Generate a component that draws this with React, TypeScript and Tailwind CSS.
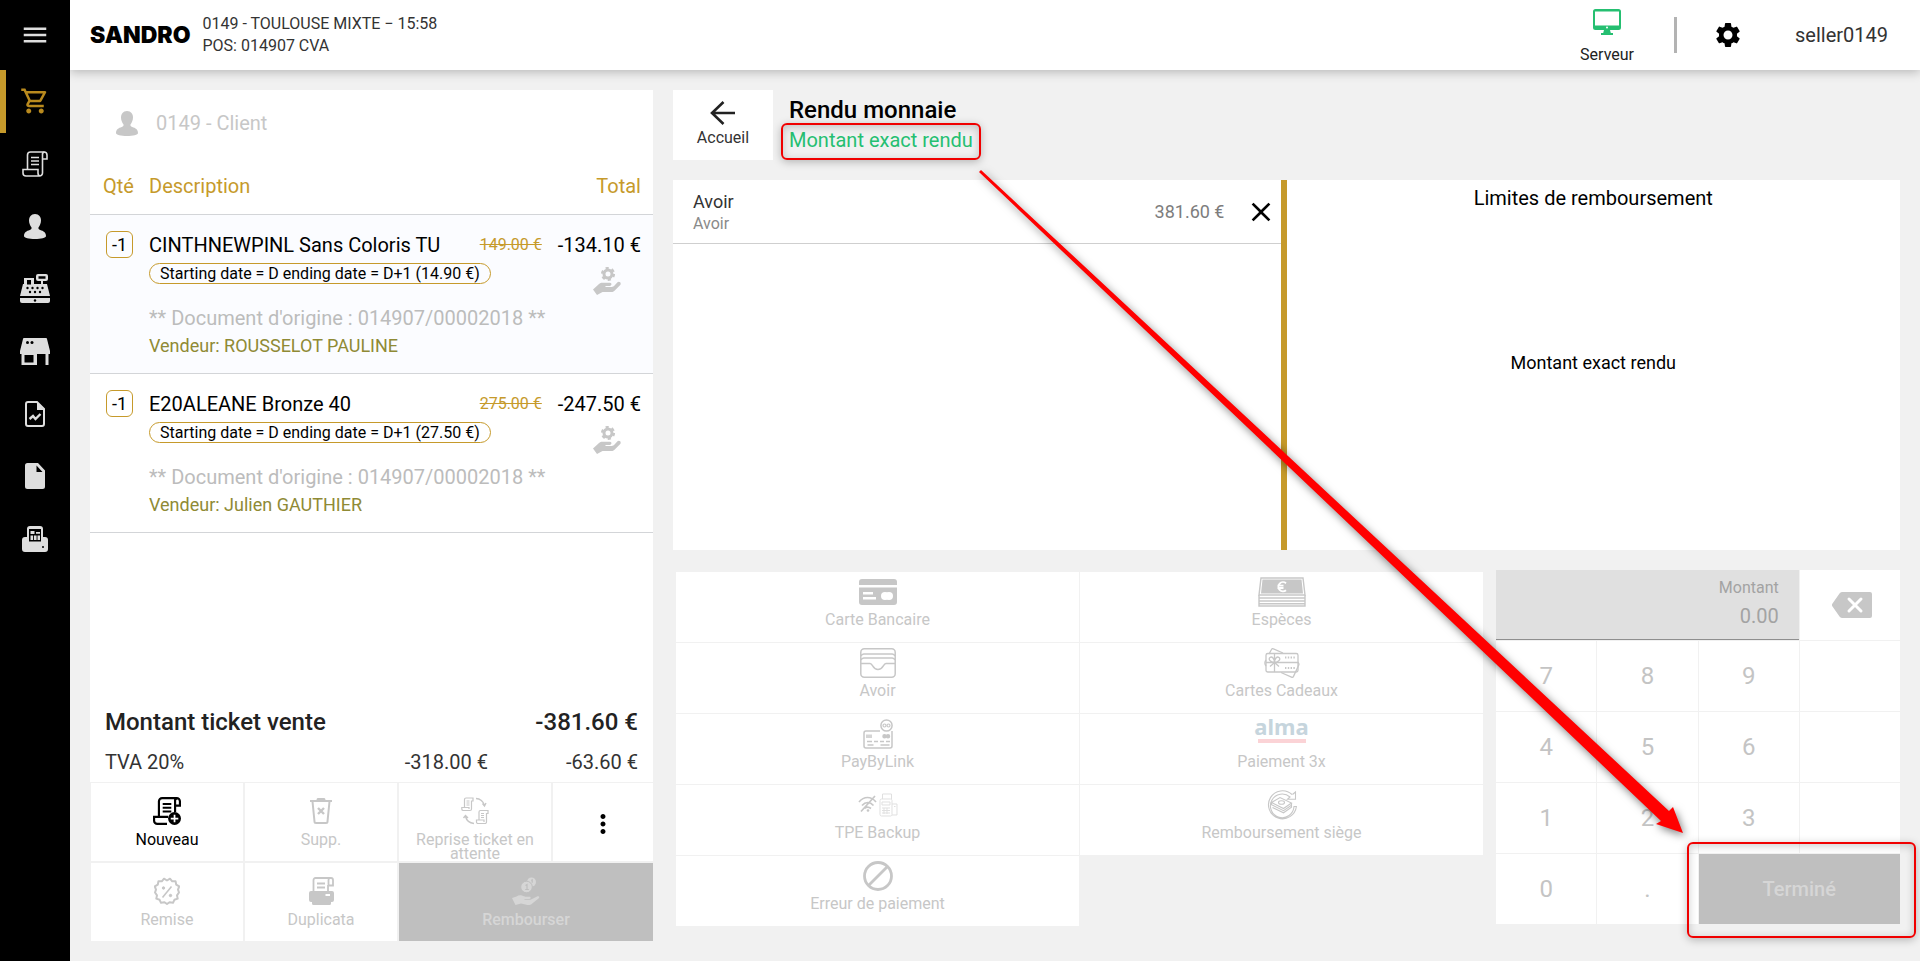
import type { ReactNode } from "react";
import clsx from "clsx";
import { MdClose, MdMenu, MdMoreVert, MdOutlineShoppingCart, MdSettings } from "react-icons/md";

/* ---------- icons ---------- */

function ReceiptIcon({ className, plus }: { className?: string; plus?: boolean }) {
  return (
    <svg viewBox="0 0 26 26" className={className} fill="none" stroke="currentColor" strokeWidth={plus ? 2 : 1.6} aria-hidden>
      <path d="M5.5 18.5V4a3 3 0 0 1 3-3H22a3 3 0 0 1 3 3v4h-4" />
      <path d={plus ? "M20.5 14V4a2.6 2.6 0 0 1 2-3" : "M20.5 22V4a2.6 2.6 0 0 1 2-3"} />
      <path d={plus ? "M14 18.5H1V22a3 3 0 0 0 3 3h9" : "M20.5 22a3 3 0 0 1-3 3H4a3 3 0 0 1-3-3v-3.5h15V22a3 3 0 0 0 2 3"} />
      <path d="M9 6.5h8M9 10h8M9 13.5h8" />
      {plus && (
        <>
          <circle cx="20" cy="20" r="6" fill="currentColor" stroke="none" />
          <path d="M20 16.5v7M16.5 20h7" stroke="white" strokeWidth="1.6" />
        </>
      )}
    </svg>
  );
}

function PersonIcon({ className }: { className?: string }) {
  return (
    <svg viewBox="0 0 22 25" className={className} fill="currentColor" aria-hidden>
      <path d="M11 0c4 0 6 3 6 6.500 0 3-1.200 5-2.400 6.800-.6 1.200.2 2.200 1.600 2.800C19.500 17 22 18.700 22 22c0 2-5 3-11 3S0 24 0 22c0-3.300 2.500-5 5.800-5.900 1.400-.6 2.200-1.600 1.600-2.800C6.200 11.500 5 9.500 5 6.500 5 3 7 0 11 0z" />
    </svg>
  );
}

function RegisterIcon() {
  return (
    <svg viewBox="0 0 30 30" className="size-[30px]" fill="currentColor" aria-hidden>
      <path fillRule="evenodd" d="M4 4h10v6h7V7h-3a2 2 0 0 1-2-2V2a2 2 0 0 1 2-2h8a2 2 0 0 1 2 2v3a2 2 0 0 1-2 2h-3v3h4l3 12H0L3 10h1zM7 6v4.500h4V6zM18.500 2.200v2.600h7V2.200z" />
      <path d="M0 24h30v3a2 2 0 0 1-2 2H2a2 2 0 0 1-2-2z" />
      <g fill="black">
        <circle cx="7.500" cy="14" r="1.200" />
        <circle cx="12.500" cy="14" r="1.200" />
        <circle cx="17.500" cy="14" r="1.200" />
        <circle cx="22.500" cy="14" r="1.200" />
        <circle cx="10" cy="18" r="1.200" />
        <circle cx="15" cy="18" r="1.200" />
        <circle cx="20" cy="18" r="1.200" />
        <circle cx="15" cy="26.500" r="1.200" />
      </g>
    </svg>
  );
}

function StoreIcon() {
  return (
    <svg viewBox="0 0 30 27" className="h-[27px] w-[30px]" fill="currentColor" aria-hidden>
      <path fillRule="evenodd" d="M4 0h22a1 1 0 0 1 1 1l3 12v3h-1.500v11h-3V16H17v11H1.500V16H0v-3L3 1a1 1 0 0 1 1-1zM4.500 17v7.500h9V17z" />
      <circle cx="7.500" cy="4.500" r="1.500" fill="black" />
      <circle cx="12" cy="4.500" r="1.500" fill="black" />
    </svg>
  );
}

function ReportIcon() {
  return (
    <svg viewBox="0 0 20 26" className="h-[26px] w-5" fill="none" stroke="currentColor" strokeWidth="2" aria-hidden>
      <path d="M3 1h9l7 7v15a2 2 0 0 1-2 2H3a2 2 0 0 1-2-2V3a2 2 0 0 1 2-2z" />
      <path d="M12 1v8h7z" fill="currentColor" stroke="none" />
      <path d="M4.500 18l3.500-3 2.500 3 5-5" strokeWidth="2.400" />
    </svg>
  );
}

function FileIcon() {
  return (
    <svg viewBox="0 0 20 26" className="h-[26px] w-5" fill="currentColor" aria-hidden>
      <path fillRule="evenodd" d="M2.500 0H13l7 7.500V23.500a2.500 2.500 0 0 1-2.500 2.500h-15A2.500 2.500 0 0 1 0 23.500v-21A2.500 2.500 0 0 1 2.500 0zM11.500 2.500v6.500h6z" />
    </svg>
  );
}

function FiscalPrinterIcon() {
  return (
    <svg viewBox="0 0 26 26" className="size-[26px]" fill="currentColor" aria-hidden>
      <path fillRule="evenodd" d="M8 0h10a3 3 0 0 1 3 3v8h2a3 3 0 0 1 3 3v9a3 3 0 0 1-3 3H3a3 3 0 0 1-3-3v-9a3 3 0 0 1 3-3h2V3a3 3 0 0 1 3-3zM7 3v12.500h12V3z" />
      <path d="M8.500 5h4v3h-4zM14 6h4v1.800h-4zM8.500 9.500h2.600V14H8.500zM12 9.500h2.600V14H12zM15.500 9.500H18V14h-2.500z" />
      <circle cx="21" cy="21" r="1" fill="black" />
    </svg>
  );
}

function MonitorIcon() {
  return (
    <svg viewBox="0 0 28 26" className="h-[26px] w-7" fill="#25bf71" aria-hidden>
      <path fillRule="evenodd" d="M2.500 0h23A2.500 2.500 0 0 1 28 2.500v16a2.500 2.500 0 0 1-2.500 2.500H17l.8 3H20v2H8v-2h2.200l.8-3H2.500A2.500 2.500 0 0 1 0 18.500v-16A2.500 2.500 0 0 1 2.500 0zM2 2.500v14h24v-14z" />
      <circle cx="14" cy="18.500" r="1" fill="white" />
    </svg>
  );
}

function GearHandIcon() {
  return (
    <svg viewBox="0 0 28 28" className="size-7" fill="currentColor" aria-hidden>
      <circle cx="15" cy="7" r="4" fill="none" stroke="currentColor" strokeWidth="3" />
      <circle cx="15" cy="7" r="6" fill="none" stroke="currentColor" strokeWidth="2.200" strokeDasharray="3.140 3.140" />
      <path d="M0 22.500l6-5.500c1-.9 2-1.200 3.500-1.200H17c2 0 2 3-.2 3.200h-4.300v1h6.300c1 0 1.800-.5 2.500-1.200l3.200-3.500c1.200-1.200 3.500-.2 3.200 1.600-.1.600-.4 1-.7 1.400l-5.500 5.500c-.9.900-1.800 1.200-3 1.200H9.500l-5.500 3z" />
    </svg>
  );
}

function ArrowLeftIcon() {
  return (
    <svg viewBox="0 0 26 24" className="h-6 w-[26px]" fill="none" stroke="#222" strokeWidth="2.600" aria-hidden>
      <path d="M13.500 1L2 12l11.500 11M2 12h23" />
    </svg>
  );
}

function TrashIcon() {
  return (
    <svg viewBox="0 0 24 28" className="h-7 w-6" fill="none" stroke="currentColor" strokeWidth="2" aria-hidden>
      <path d="M1 4h22M3.500 4.500l2 20a1.500 1.500 0 0 0 1.500 1.500h10a1.500 1.500 0 0 0 1.500-1.500l2-20M8 3l1-1h6l1 1" />
      <path d="M9 11l6 6M15 11l-6 6" strokeWidth="2.400" />
    </svg>
  );
}

function SwapTicketIcon() {
  return (
    <svg viewBox="0 0 28 28" className="size-7" fill="none" stroke="currentColor" strokeWidth="1.200" aria-hidden>
      <path d="M3.500 10V2.500a1.500 1.500 0 0 1 1.500-1.500h7v3h-1.500V12a1.500 1.500 0 0 1-1.500 1.500H2A1.500 1.500 0 0 1 .8 12v-1.500H8V12M5.500 4h3M5.500 6h3M5.500 8h3" />
      <path d="M18 22.500V15a1.500 1.500 0 0 1 1.500-1.500H27v3h-1.500V25a1.500 1.500 0 0 1-1.500 1.500h-7a1.500 1.500 0 0 1-1.500-1.500v-2h7.500v2M20 16.500h3M20 18.500h3M20 20.500h3" />
      <path d="M15 1.500c4 0 7.500 3 8.500 7M21.500 6.500l2 2.500 1.500-3M13 26.500c-4-.5-7.500-3-8.500-7M2.500 21l2-2.500L7 21" strokeWidth="1.400" />
    </svg>
  );
}

function DiscountIcon() {
  return (
    <svg viewBox="0 0 26 28" className="h-7 w-[26px]" fill="none" stroke="currentColor" strokeWidth="2" aria-hidden>
      <path strokeLinejoin="round" d="M13 3.500l3-1.800 2.200 2.600 3.400 0 .6 3.400 3 1.700-1.200 3.300L25 15.500l-2 2.900.7 3.200-3.300 1.200-1.400 3-3.500-.6L13 27l-2.500-1.800-3.500.6-1.400-3-3.300-1.200.7-3.200-2-2.900 1-2.800L.8 9.400l3-1.700.6-3.400 3.400 0L10 1.700z" />
      <path d="M17.500 9.500l-9 11" strokeWidth="1.600" />
      <circle cx="9.500" cy="11" r="1.200" fill="currentColor" strokeWidth="1" />
      <circle cx="16.500" cy="18.500" r="1.200" fill="currentColor" strokeWidth="1" />
    </svg>
  );
}

function PrintCopyIcon() {
  return (
    <svg viewBox="0 0 25 28" className="h-7 w-[25px]" fill="none" stroke="currentColor" strokeWidth="1.800" aria-hidden>
      <path d="M4.500 14V3a2 2 0 0 1 2-2H22a2 2 0 0 1 2 2v5.500h-4.500V3a2 2 0 0 1 1.500-2M19 8v6M8 6.500h8M8 10.500h8" />
      <path fillRule="evenodd" fill="currentColor" stroke="none" d="M2 14h21a2 2 0 0 1 2 2v7a2 2 0 0 1-2 2h-1v1.500a1.500 1.500 0 0 1-1.500 1.500h-16A1.500 1.500 0 0 1 3 26.500V25H2a2 2 0 0 1-2-2v-7a2 2 0 0 1 2-2zM16.500 17v2H21v-2z" />
    </svg>
  );
}

function CoinsHandIcon() {
  return (
    <svg viewBox="0 0 28 28" className="size-7" fill="currentColor" aria-hidden>
      <path d="M0 21l4.500-1.500c2-1.500 4-1.500 6-.8l3 1h4c1.500 0 1.500 2 0 2.200h-5v.8h6l6.500-3.200c2-.8 3 .8 1.500 2L19 27.500c-1.500.8-3 .6-4.500.2L9 26.500 3.500 28z" />
      <circle cx="19.500" cy="5" r="4.500" />
      <circle cx="14.500" cy="10" r="5.800" stroke="#bfbfbf" />
      <path d="M13.500 8.500l1.500-1v5M13.200 12.500h3.600M19.200 3.500l1-.7v3" fill="none" stroke="#bfbfbf" strokeWidth="1.200" />
    </svg>
  );
}

function BankCardIcon() {
  return (
    <svg viewBox="0 0 38 26" className="h-[26px] w-[38px]" fill="currentColor" aria-hidden>
      <path d="M3 0h32a3 3 0 0 1 3 3v3H0V3a3 3 0 0 1 3-3z" />
      <path fillRule="evenodd" d="M0 8.500h38V23a3 3 0 0 1-3 3H3a3 3 0 0 1-3-3zM4 13v2.500h10V13zM4 18v2.500h13V18z" />
      <circle cx="26" cy="17" r="4" fill="white" />
      <circle cx="30" cy="17" r="4" fill="white" />
    </svg>
  );
}

function CashIcon() {
  return (
    <svg viewBox="0 0 48 30" className="h-[30px] w-12" fill="none" stroke="currentColor" strokeWidth="1.400" aria-hidden>
      <path d="M3 1h42l2 17H1z" />
      <path d="M4.500 2.500h39l1.500 14H3z" fill="currentColor" stroke="none" />
      <path d="M1 18v11h46V18M1 21h46M1 24h46M1 26.800h46" />
      <path d="M28 6.200a4.600 4.600 0 1 0 0 7M19.500 8.600h6M19.500 11h6" stroke="white" strokeWidth="1.900" />
    </svg>
  );
}

function WalletIcon() {
  return (
    <svg viewBox="0 0 36 30" className="h-[30px] w-9" fill="none" stroke="currentColor" strokeWidth="1.500" aria-hidden>
      <rect x="0.800" y="0.800" width="34.400" height="28.400" rx="3.500" />
      <path d="M1 8a3 3 0 0 1 3-2h28a3 3 0 0 1 3 2M1 12a3 3 0 0 1 3-2h28a3 3 0 0 1 3 2M1 15.500h9c3 0 2.500 6 8 6s5-6 8-6h9" />
    </svg>
  );
}

function GiftCardsIcon() {
  return (
    <svg viewBox="0 0 36 30" className="h-[30px] w-9" fill="none" stroke="currentColor" strokeWidth="1.300" aria-hidden>
      <path d="M5 6l2.500-4.500a1.500 1.500 0 0 1 2-.6L19 5M17 24.500l10.500 4.600a1.500 1.500 0 0 0 2-.7L34.800 17c.5-1-.1-2-1-3M2 12c-1.500 2-1.500 4 0 6" />
      <rect x="2" y="5.500" width="32" height="18.500" rx="1.800" />
      <path d="M2 14.500h32M10.500 5.500V24M10.500 14.500C6 14 4 11 6 9.500s4.500 1 4.500 5c0-4 2.500-6.500 4.500-5s0 4.500-4.500 5l-4.500 4M10.500 14.500l4.500 4" />
      <path d="M21 9.500h10M21 20h10" strokeDasharray="1.400 1.400" strokeWidth="2" />
    </svg>
  );
}

function PayLinkIcon() {
  return (
    <svg viewBox="0 0 30 30" className="size-[30px]" fill="none" stroke="currentColor" strokeWidth="1.500" aria-hidden>
      <path d="M17 12H3a2 2 0 0 0-2 2v13a2 2 0 0 0 2 2h24a2 2 0 0 0 2-2V12" />
      <circle cx="23.500" cy="6.500" r="5.600" />
      <circle cx="21.500" cy="6.500" r="1.500" strokeWidth="1.200" />
      <circle cx="25.500" cy="6.500" r="1.500" strokeWidth="1.200" />
      <path d="M4 15.500v3.500M6 15.500v3.500M8 15.500v3.500M4 22.500h5M11 22.500h4M17 22.500h4M23 22.500h4M4.500 26h6M17.500 26h9" />
      <circle cx="21.500" cy="17.200" r="1.500" fill="currentColor" />
      <circle cx="25" cy="17.200" r="1.500" fill="currentColor" />
    </svg>
  );
}

function TpeIcon() {
  return (
    <svg viewBox="0 0 40 24" className="h-6 w-10" fill="none" stroke="currentColor" strokeWidth="1.700" aria-hidden>
      <path d="M1 9c5-6 12-6 17 0M4 12.500c3.500-4 8-4 11.500 0M6.500 15.500c2-2 4-2 6.500 0M17 3L3 18.500" />
      <circle cx="10" cy="17.500" r="1.300" fill="currentColor" stroke="none" />
      <g strokeWidth="1" opacity="0.550">
        <rect x="22" y="6" width="12" height="17" rx="1.500" />
        <path d="M24.500 6V1h9v5M24 9h8v3h-8zM24 15h8M24 17.500h8M24 20h8M34 11h5v11h-5M36 13.500h1.500" />
        <path d="M26 15v6M29 15v6" />
      </g>
    </svg>
  );
}

function AlmaLogo() {
  return (
    <span className="mb-2 flex w-12 flex-col items-center border-b-4 border-[#fbd3d6] pb-1 font-['Noto_Sans'] text-[22px] font-bold leading-[18px] text-[#c6d5dd]">
      alma
    </span>
  );
}

function CashBackIcon() {
  return (
    <svg viewBox="0 0 30 30" className="size-[30px]" fill="none" stroke="currentColor" strokeWidth="1.100" aria-hidden>
      <path d="M25 4.500A14 14 0 1 0 29.400 16.500H27A11.800 11.800 0 1 1 23 7l-2.500 2.300h8V2l-3 2.500" />
      <path d="M4.500 12.500l8.500-5 11.500 5.500-8 5.500zM4.500 12.500v2.200l12 6 8-5.500v-2.200M5.500 17.500l11 5.300 8-5.500v-2" />
      <ellipse cx="14.500" cy="12.500" rx="3" ry="1.800" />
    </svg>
  );
}

function ForbiddenIcon() {
  return (
    <svg viewBox="0 0 30 30" className="size-[30px]" fill="none" stroke="currentColor" strokeWidth="2.800" aria-hidden>
      <circle cx="15" cy="15" r="13.500" />
      <path d="M24.500 5.500l-19 19" />
    </svg>
  );
}

function BackspaceIcon() {
  return (
    <svg viewBox="0 0 40 26" className="ml-1 h-[26px] w-10" aria-hidden>
      <path d="M10 0h28a2 2 0 0 1 2 2v22a2 2 0 0 1-2 2H10a3 3 0 0 1-2.500-1.500L.5 14.500a2.500 2.500 0 0 1 0-3l7-10A3 3 0 0 1 10 0z" fill="#c7c7c7" />
      <path d="M17 7l12 12M29 7L17 19" stroke="white" strokeWidth="3" strokeLinecap="round" />
    </svg>
  );
}

/* ---------- data ---------- */

const navItems: { label: string; icon: ReactNode; active?: boolean }[] = [
  { label: "Vente", icon: <MdOutlineShoppingCart className="size-[30px]" />, active: true },
  { label: "Tickets", icon: <ReceiptIcon className="size-[26px]" /> },
  { label: "Clients", icon: <PersonIcon className="h-[25px] w-[22px]" /> },
  { label: "Caisse", icon: <RegisterIcon /> },
  { label: "Magasin", icon: <StoreIcon /> },
  { label: "Rapports", icon: <ReportIcon /> },
  { label: "Documents", icon: <FileIcon /> },
  { label: "Imprimante", icon: <FiscalPrinterIcon /> },
];

const ticketLines = [
  { name: "CINTHNEWPINL Sans Coloris TU", oldPrice: "149.00 €", price: "-134.10 €", discount: "14.90 €", seller: "ROUSSELOT PAULINE", selected: true },
  { name: "E20ALEANE Bronze 40", oldPrice: "275.00 €", price: "-247.50 €", discount: "27.50 €", seller: "Julien GAUTHIER", selected: false },
];

const paymentMethods: { label: string; icon: ReactNode }[] = [
  { label: "Carte Bancaire", icon: <BankCardIcon /> },
  { label: "Espèces", icon: <CashIcon /> },
  { label: "Avoir", icon: <WalletIcon /> },
  { label: "Cartes Cadeaux", icon: <GiftCardsIcon /> },
  { label: "PayByLink", icon: <PayLinkIcon /> },
  { label: "Paiement 3x", icon: <AlmaLogo /> },
  { label: "TPE Backup", icon: <TpeIcon /> },
  { label: "Remboursement siège", icon: <CashBackIcon /> },
  { label: "Erreur de paiement", icon: <ForbiddenIcon /> },
];

const keys = ["7", "8", "9", "", "4", "5", "6", "", "1", "2", "3", "", "0", "."];

/* ---------- layout ---------- */

function Sidebar() {
  return (
    <nav className="flex w-[70px] shrink-0 flex-col bg-black text-[#dedede]">
      <button aria-label="Menu" className="flex h-[70px] items-center justify-center">
        <MdMenu className="size-[30px]" />
      </button>
      <div className="grid h-[500px] grid-rows-8">
        {navItems.map((item) => (
          <button
            key={item.label}
            aria-label={item.label}
            className={clsx(
              "flex items-center justify-center border-l-6 pr-1.5",
              item.active ? "border-[#c69a2b] text-[#b98a1e]" : "border-transparent",
            )}
          >
            {item.icon}
          </button>
        ))}
      </div>
    </nav>
  );
}

function Header() {
  return (
    <header className="z-10 flex h-[70px] items-center bg-white pl-5 pr-8 text-[#333] shadow-[0_2px_10px_rgba(0,0,0,0.25)]">
      <span className="font-['Inter'] text-[23px] font-black text-black">SANDRO</span>
      <div className="ml-3 text-base leading-[22px]">
        <p>0149 - TOULOUSE MIXTE − 15:58</p>
        <p>POS: 014907 CVA</p>
      </div>
      <div className="ml-auto flex items-center">
        <div className="flex flex-col items-center gap-2.5 pt-1">
          <MonitorIcon />
          <span className="text-base leading-5 text-[#222]">Serveur</span>
        </div>
        <span className="ml-10 h-9 w-[3px] bg-[#b3b3b3]" />
        <button aria-label="Paramètres" className="ml-9 text-black">
          <MdSettings className="size-[30px]" />
        </button>
        <span className="ml-[52px] text-xl">seller0149</span>
      </div>
    </header>
  );
}

function ActionButton({ label, icon, active, className }: { label: string; icon: ReactNode; active?: boolean; className?: string }) {
  return (
    <button
      disabled={!active}
      className={clsx("flex h-[78px] flex-col items-center px-3 pt-3.5", className ?? "bg-white", active ? "text-black" : !className && "text-[#c7c7c7]")}
    >
      {icon}
      <span className="mt-2 text-base leading-[14px]">{label}</span>
    </button>
  );
}

function TicketPanel() {
  return (
    <section className="flex w-[563px] shrink-0 flex-col bg-white">
      <div className="flex h-[66px] items-center gap-[18px] pl-[26px] text-xl text-[#c7c7c7]">
        <PersonIcon className="h-[25px] w-[22px]" />
        0149 - Client
      </div>
      <table className="w-full border-separate border-spacing-0">
        <thead>
          <tr className="h-[59px] text-xl text-[#c69a2b]">
            <th className="w-[59px] border-b border-[#d3d5d8] pl-[13px] pt-0.5 text-left font-normal">Qté</th>
            <th className="border-b border-[#d3d5d8] pt-0.5 text-left font-normal">Description</th>
            <th className="border-b border-[#d3d5d8] pr-3 pt-0.5 text-right font-normal">Total</th>
          </tr>
        </thead>
        {ticketLines.map((line) => (
          <tbody key={line.name} className={clsx(line.selected && "bg-[#fbfcff]")}>
            <tr>
              <td rowSpan={2} className="border-b border-[#d3d5d8] pl-4 pt-4 align-top">
                <span className="flex size-[27px] items-center justify-center rounded-md border border-[#c69a2b] text-lg leading-6">-1</span>
              </td>
              <td className="pt-4 text-xl leading-7">{line.name}</td>
              <td className="pr-3 pt-4">
                <div className="flex items-center justify-end gap-4 whitespace-nowrap text-xl leading-7">
                  <s className="text-base leading-7 text-[#c69a2b]">{line.oldPrice}</s>
                  <span>{line.price}</span>
                </div>
              </td>
            </tr>
            <tr>
              <td colSpan={2} className="border-b border-[#d3d5d8] pb-[13px] pr-8">
                <div className="flex justify-between">
                  <div>
                    <p className="mt-1 flex h-[21px] w-fit items-center rounded-full border border-[#c69a2b] px-2.5 text-base">
                      Starting date = D ending date = D+1 ({line.discount})
                    </p>
                    <p className="mt-5 text-xl text-[#bcbcbc]">** Document d'origine : 014907/00002018 **</p>
                    <p className="text-lg leading-7 text-[#8f8a35]">Vendeur: {line.seller}</p>
                  </div>
                  <div className="mt-2 text-[#c7c7c7]">
                    <GearHandIcon />
                  </div>
                </div>
              </td>
            </tr>
          </tbody>
        ))}
      </table>
      <div className="mt-auto px-[15px] text-[#222]">
        <div className="flex justify-between text-2xl font-medium leading-9">
          <span>Montant ticket vente</span>
          <span>-381.60 €</span>
        </div>
        <div className="mt-2 flex pb-1.5 text-xl leading-7 text-[#333]">
          <span>TVA 20%</span>
          <span className="ml-auto">-318.00 €</span>
          <span className="w-[150px] text-right">-63.60 €</span>
        </div>
      </div>
      <div className="grid grid-cols-[152px_152px_152px_1fr] gap-0.5 border border-r-0 border-b-0 border-[#f1f1f1] bg-[#f1f1f1]">
        <ActionButton label="Nouveau" icon={<ReceiptIcon plus className="size-7" />} active />
        <ActionButton label="Supp." icon={<TrashIcon />} />
        <ActionButton label="Reprise ticket en attente" icon={<SwapTicketIcon />} />
        <button aria-label="Plus d'actions" className="flex items-center justify-center bg-white pt-1 text-black">
          <MdMoreVert className="size-[30px]" />
        </button>
        <ActionButton label="Remise" icon={<DiscountIcon />} />
        <ActionButton label="Duplicata" icon={<PrintCopyIcon />} />
        <ActionButton label="Rembourser" icon={<CoinsHandIcon />} className="col-span-2 bg-[#bfbfbf] font-medium text-[#d6d6d6]" />
      </div>
    </section>
  );
}

/* Red frame laid over the element it is placed in */
function Highlight({ className }: { className: string }) {
  return (
    <span
      className={clsx(
        "pointer-events-none absolute z-20 rounded-md border-2 border-[#f00000] shadow-[0_2px_8px_rgba(0,0,0,0.25),inset_0_2px_8px_rgba(0,0,0,0.2)]",
        className,
      )}
    />
  );
}

function ChangePanel() {
  return (
    <div className="flex flex-1 bg-white">
      <div className="w-1/2 border-r-6 border-[#c69a2b]">
        <div className="flex h-16 items-center border-b border-[#cfcfcf] pl-5 pr-1">
          <div>
            <p className="text-lg leading-6 text-[#333]">Avoir</p>
            <p className="text-base leading-5 text-[#8a8a8a]">Avoir</p>
          </div>
          <span className="ml-auto text-lg text-[#7d7d7d]">381.60 €</span>
          <button aria-label="Supprimer le paiement" className="ml-5 text-black">
            <MdClose className="size-8" />
          </button>
        </div>
      </div>
      <div className="flex w-1/2 flex-col items-center pt-1 text-black">
        <p className="text-xl">Limites de remboursement</p>
        <p className="my-auto pb-9 text-lg">Montant exact rendu</p>
      </div>
    </div>
  );
}

function PaymentMethods() {
  return (
    <div className="ml-[3px] mt-0.5 grid flex-1 auto-rows-[70px] grid-cols-2 content-start gap-px">
      {paymentMethods.map((method) => (
        <button key={method.label} disabled className="flex flex-col items-center bg-white pt-1 text-[#c7c7c7]">
          <span className="flex h-8 items-center">{method.icon}</span>
          <span className="text-base leading-6">{method.label}</span>
        </button>
      ))}
    </div>
  );
}

function Keypad() {
  return (
    <div className="grid w-[404px] shrink-0 auto-rows-[70px] grid-cols-4 gap-px">
      <div className="col-span-3 flex flex-col items-end border-b border-[#8f8f8f] bg-[#e0e0e0] px-5 pt-1.5 text-[#a3a3a3]">
        <label htmlFor="amount" className="text-base leading-6">
          Montant
        </label>
        <input id="amount" disabled defaultValue="0.00" className="w-full bg-transparent text-right text-xl leading-8" />
      </div>
      <button aria-label="Effacer" disabled className="flex items-center justify-center bg-white">
        <BackspaceIcon />
      </button>
      {keys.map((key, i) => (
        <button key={i} disabled className="bg-white text-2xl text-[#c4c4c4]">
          {key}
        </button>
      ))}
      <div className="relative col-span-2 flex">
        <button disabled className="flex-1 bg-[#bfbfbf] text-xl font-medium text-[#d6d6d6]">
          Terminé
        </button>
        <Highlight className="-bottom-3.5 -left-3 -right-4 -top-3" />
      </div>
    </div>
  );
}

export default function App() {
  return (
    <div className="relative flex min-h-screen overflow-hidden bg-[#f1f1f1] font-['Roboto',sans-serif] text-black">
      <Sidebar />
      <div className="flex min-w-0 flex-1 flex-col">
        <Header />
        <main className="flex flex-1 gap-5 p-5">
          <TicketPanel />
          <section className="flex min-w-0 flex-1 flex-col gap-5">
            <div className="flex gap-4">
              <button className="flex h-[70px] w-[100px] flex-col items-center bg-white pt-[11px] text-[#333]">
                <ArrowLeftIcon />
                <span className="mt-px text-base leading-6">Accueil</span>
              </button>
              <div className="pt-1">
                <h1 className="text-2xl font-medium leading-8">Rendu monnaie</h1>
                <p className="relative text-xl text-[#25bf71]">
                  Montant exact rendu
                  <Highlight className="-bottom-1.5 -left-2 -right-2 -top-[3px]" />
                </p>
              </div>
            </div>
            <ChangePanel />
            <div className="flex gap-[13px] pb-[15px]">
              <PaymentMethods />
              <Keypad />
            </div>
          </section>
        </main>
      </div>
      <svg
        viewBox="0 0 720 680"
        className="pointer-events-none absolute left-[970px] top-40 z-20 h-[680px] w-[720px] drop-shadow-[2px_3px_4px_rgba(0,0,0,0.5)]"
        aria-hidden
      >
        <path d="M9 12L11 10L699 651L703 647L713 673L686 664L691 661z" fill="#ff0000" />
      </svg>
    </div>
  );
}
